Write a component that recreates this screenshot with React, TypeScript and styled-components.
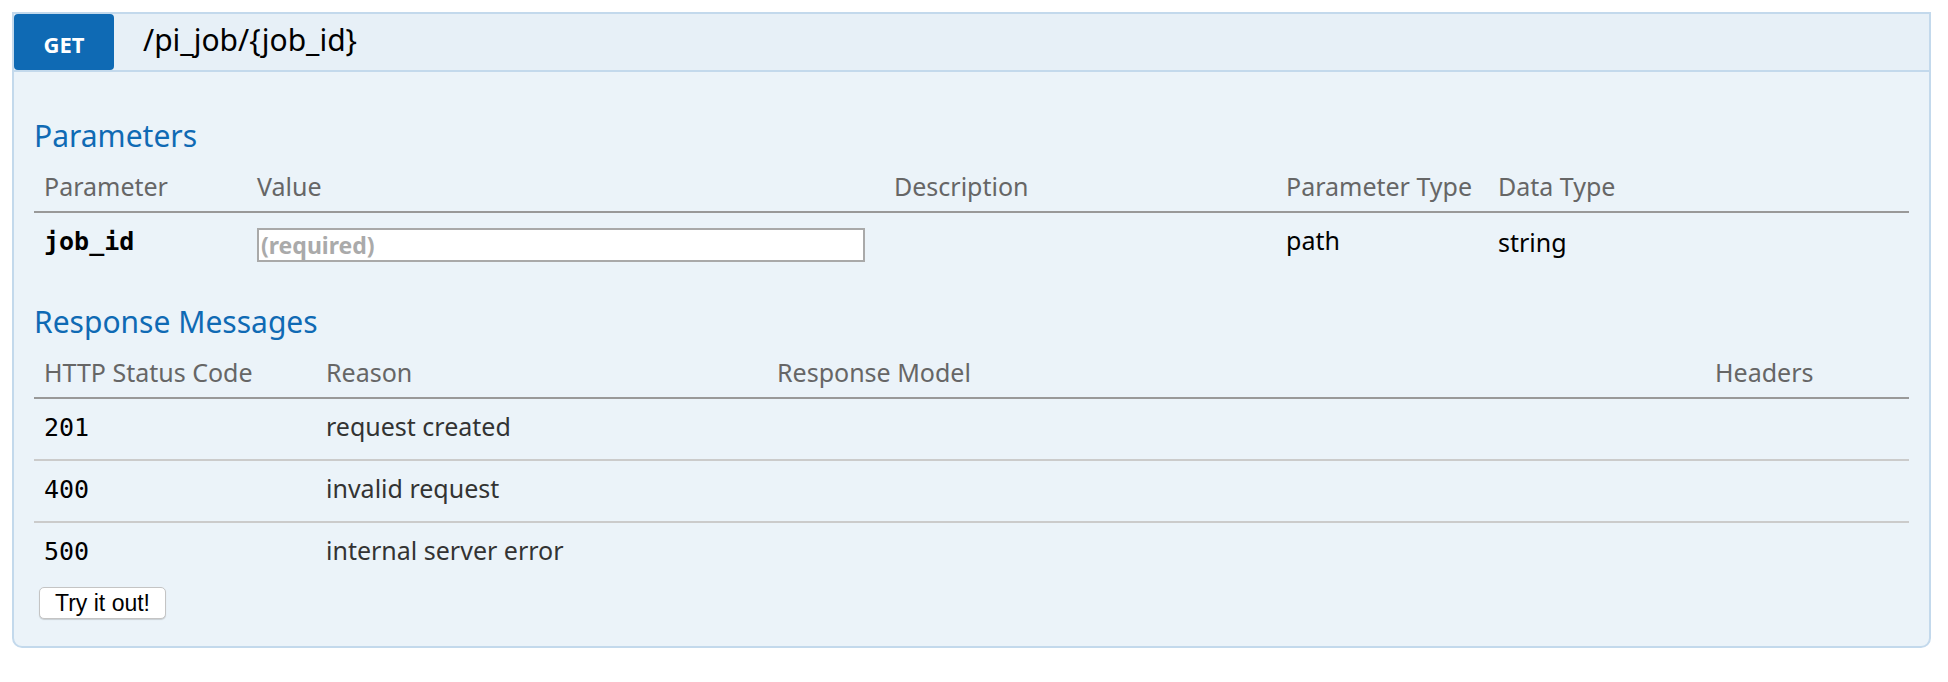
import React from 'react';
import styled, { createGlobalStyle } from 'styled-components';

const GlobalStyle = createGlobalStyle`
  html, body {
    margin: 0;
    padding: 0;
    background: #fff;
  }
  body {
    font-family: "Noto Sans", "Open Sans", sans-serif;
  }
`;

const Page = styled.div`
  padding: 12px;
`;

const Operation = styled.div`
  width: 1919px;
  box-sizing: border-box;
  border: 2px solid #c3d9ec;
  border-radius: 0 0 10px 10px;
  background: #ebf3f9;
`;

const Heading = styled.div`
  display: flex;
  height: 56px;
  background: #e7f0f7;
  border-bottom: 2px solid #c3d9ec;
`;

const Method = styled.span`
  width: 100px;
  display: flex;
  align-items: center;
  justify-content: center;
  box-sizing: border-box;
  padding-top: 3px;
  background: #0f6ab4;
  color: #fff;
  border-radius: 4px;
  font-size: 22px;
  font-weight: bold;
  text-transform: uppercase;
`;

const Path = styled.span`
  margin-left: 29px;
  font-size: 30px;
  line-height: 52px;
  color: #000;
`;

const Content = styled.div`
  padding: 46px 20px 27px;
`;

const SectionTitle = styled.h4<{ $first?: boolean }>`
  margin: ${(p) => (p.$first ? '0' : '26px')} 0 7px;
  font-size: 30px;
  line-height: 36px;
  font-weight: normal;
  color: #0f6ab4;
`;

const Table = styled.table`
  width: 100%;
  table-layout: fixed;
  border-collapse: separate;
  border-spacing: 0;
`;

// width is the content width; cells add 10px padding each side
const Th = styled.th<{ $w: number }>`
  width: ${(p) => p.$w}px;
  padding: 8px 10px;
  text-align: left;
  font-weight: normal;
  font-size: 25px;
  line-height: 34px;
  color: #666;
  border-bottom: 2px solid #999;
  white-space: nowrap;
`;

const Row = styled.tr`
  & + & > td {
    border-top: 2px solid #cbcbcb;
  }
`;

const Td = styled.td<{ $tone?: 'dark' | 'black'; $drop?: number }>`
  padding: ${(p) => 10 + (p.$drop || 0)}px 10px ${(p) => 16 - (p.$drop || 0)}px;
  vertical-align: top;
  font-size: 25px;
  line-height: 34px;
  color: ${(p) => (p.$tone === 'dark' ? '#333' : '#000')};
`;

const Code = styled.span<{ $bold?: boolean }>`
  font-family: "DejaVu Sans Mono", "Liberation Mono", monospace;
  font-weight: ${(p) => (p.$bold ? 'bold' : 'normal')};
  line-height: 1;
  color: #000;
`;

const ValueInput = styled.input`
  display: block;
  margin-top: 5px;
  width: 608px;
  height: 34px;
  box-sizing: border-box;
  padding: 0 2px;
  border: 2px solid #a9a9a9;
  border-radius: 0;
  background: #fff;
  font-family: "Noto Sans", sans-serif;
  font-size: 23px;
  font-weight: bold;
  outline: none;
  &::placeholder {
    color: #aaa;
  }
`;

const TryButton = styled.button`
  display: block;
  margin: 4px 0 0 5px;
  height: 32px;
  padding: 0 15px;
  background: #fff;
  border: 1px solid #c4c4c4;
  border-radius: 5px;
  box-shadow: 0 1px 1px rgba(0, 0, 0, 0.15);
  font-family: "Liberation Sans", Arial, sans-serif;
  font-size: 23px;
  line-height: 30px;
  color: #000;
`;

const responses = [
  { code: '201', reason: 'request created' },
  { code: '400', reason: 'invalid request' },
  { code: '500', reason: 'internal server error' },
];

export default function App() {
  return (
    <Page>
      <GlobalStyle />
      <Operation>
        <Heading>
          <Method>get</Method>
          <Path>/pi_job/{'{job_id}'}</Path>
        </Heading>
        <Content>
          <SectionTitle $first>Parameters</SectionTitle>
          <Table>
            <thead>
              <tr>
                <Th $w={193}>Parameter</Th>
                <Th $w={617}>Value</Th>
                <Th $w={372}>Description</Th>
                <Th $w={192}>Parameter Type</Th>
                <Th $w={401}>Data Type</Th>
              </tr>
            </thead>
            <tbody>
              <Row>
                <Td>
                  <Code $bold>job_id</Code>
                </Td>
                <Td>
                  <ValueInput placeholder="(required)" />
                </Td>
                <Td />
                <Td>path</Td>
                <Td $drop={2}>string</Td>
              </Row>
            </tbody>
          </Table>

          <SectionTitle>Response Messages</SectionTitle>
          <Table>
            <thead>
              <tr>
                <Th $w={262}>HTTP Status Code</Th>
                <Th $w={431}>Reason</Th>
                <Th $w={918}>Response Model</Th>
                <Th $w={184}>Headers</Th>
              </tr>
            </thead>
            <tbody>
              {responses.map((r) => (
                <Row key={r.code}>
                  <Td>
                    <Code>{r.code}</Code>
                  </Td>
                  <Td $tone="dark">{r.reason}</Td>
                  <Td />
                  <Td />
                </Row>
              ))}
            </tbody>
          </Table>
          <TryButton>Try it out!</TryButton>
        </Content>
      </Operation>
    </Page>
  );
}
